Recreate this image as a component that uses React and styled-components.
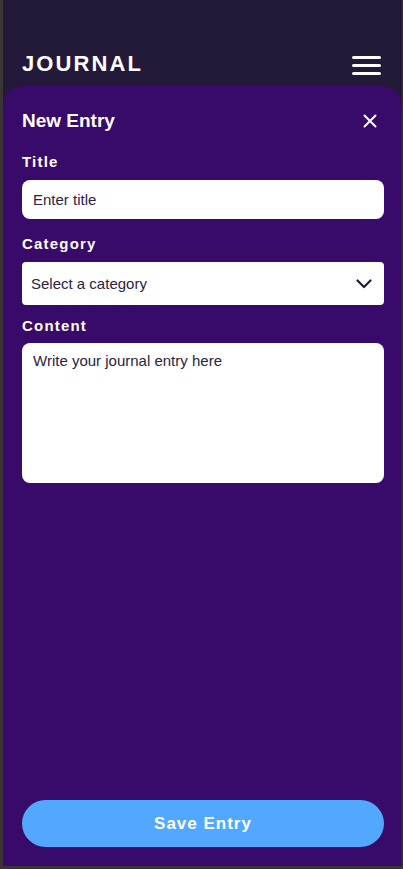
import React from "react";
import styled, { createGlobalStyle } from "styled-components";

const GlobalStyle = createGlobalStyle`
  * { box-sizing: border-box; }
  body {
    margin: 0;
    font-family: "Liberation Sans", Arial, sans-serif;
    background: #3b3434;
  }
`;

const App = () => {
  return (
    <>
      <GlobalStyle />
      <Frame>
        <Header>
          <Logo>JOURNAL</Logo>
          <MenuButton aria-label="menu">
            <Bar />
            <Bar />
            <Bar />
          </MenuButton>
        </Header>
        <Panel>
          <PanelHead>
            <PanelTitle>New Entry</PanelTitle>
            <CloseButton aria-label="close">
              <svg width="14" height="14" viewBox="0 0 14 14">
                <path
                  d="M1.5 1.5L12.5 12.5M12.5 1.5L1.5 12.5"
                  stroke="#fff"
                  strokeWidth="2"
                  strokeLinecap="round"
                />
              </svg>
            </CloseButton>
          </PanelHead>

          <Field $space={16}>
            <Label>Title</Label>
            <Input placeholder="Enter title" />
          </Field>

          <Field $space={12}>
            <Label>Category</Label>
            <SelectBox>
              <span>Select a category</span>
              <svg width="16" height="10" viewBox="0 0 16 10">
                <path
                  d="M1.5 1.5L8 8L14.5 1.5"
                  stroke="#231a3a"
                  strokeWidth="2.2"
                  fill="none"
                  strokeLinecap="round"
                  strokeLinejoin="round"
                />
              </svg>
            </SelectBox>
          </Field>

          <Field $space={0} $gap={9}>
            <Label>Content</Label>
            <TextArea placeholder="Write your journal entry here" />
          </Field>

          <SaveButton>Save Entry</SaveButton>
        </Panel>
      </Frame>
    </>
  );
};

export default App;

const Frame = styled.div`
  width: 403px;
  height: 869px;
  display: flex;
  flex-direction: column;
  background: #231a3a;
  border-left: 3px solid #3b3434;
  border-right: 1px solid #3b3434;
  border-bottom: 3px solid #3b3434;
`;

const Header = styled.header`
  height: 86px;
  flex-shrink: 0;
  display: flex;
  align-items: center;
  justify-content: space-between;
  padding: 42px 21px 0 19px;
`;

const Logo = styled.h1`
  margin: 0;
  color: #fff;
  font-size: 22px;
  font-weight: 700;
  letter-spacing: 2.1px;
`;

const MenuButton = styled.button`
  display: flex;
  flex-direction: column;
  gap: 5px;
  padding: 0;
  margin-top: 2px;
  background: none;
  border: none;
`;

const Bar = styled.span`
  display: block;
  width: 29px;
  height: 3px;
  border-radius: 2px;
  background: #fff;
`;

const Panel = styled.section`
  flex: 1;
  display: flex;
  flex-direction: column;
  background: #380a69;
  border-radius: 20px 20px 0 0;
  padding: 24px 18px 19px 19px;
`;

const PanelHead = styled.div`
  display: flex;
  align-items: center;
  justify-content: space-between;
  margin-bottom: 21px;
`;

const PanelTitle = styled.h2`
  margin: 0;
  color: #fff;
  font-size: 19px;
  font-weight: 700;
`;

const CloseButton = styled.button`
  display: flex;
  padding: 0;
  margin-right: 7px;
  background: none;
  border: none;
`;

const Field = styled.div`
  display: flex;
  flex-direction: column;
  gap: ${(props) => props.$gap ?? 10}px;
  margin-bottom: ${(props) => props.$space}px;
`;

const Label = styled.label`
  color: #fff;
  font-size: 15px;
  font-weight: 700;
  letter-spacing: 1.2px;
`;

const Input = styled.input`
  height: 39px;
  border: none;
  border-radius: 8px;
  padding: 0 11px;
  font-family: "Liberation Sans", Arial, sans-serif;
  font-size: 15px;
  background: #fff;
  &::placeholder {
    color: #2a2440;
  }
`;

const SelectBox = styled.div`
  height: 43px;
  display: flex;
  align-items: center;
  justify-content: space-between;
  padding: 0 12px 0 9px;
  background: #fff;
  border-radius: 4px;
  color: #2a2440;
  font-size: 15px;
`;

const TextArea = styled.textarea`
  height: 140px;
  border: none;
  border-radius: 8px;
  padding: 9px 11px;
  resize: none;
  font-family: "Liberation Sans", Arial, sans-serif;
  font-size: 15px;
  background: #fff;
  &::placeholder {
    color: #2a2440;
  }
`;

const SaveButton = styled.button`
  margin-top: auto;
  height: 47px;
  border: none;
  border-radius: 24px;
  background: #52a8ff;
  color: #fff;
  font-family: "Liberation Sans", Arial, sans-serif;
  font-size: 17px;
  font-weight: 700;
  letter-spacing: 1px;
`;
